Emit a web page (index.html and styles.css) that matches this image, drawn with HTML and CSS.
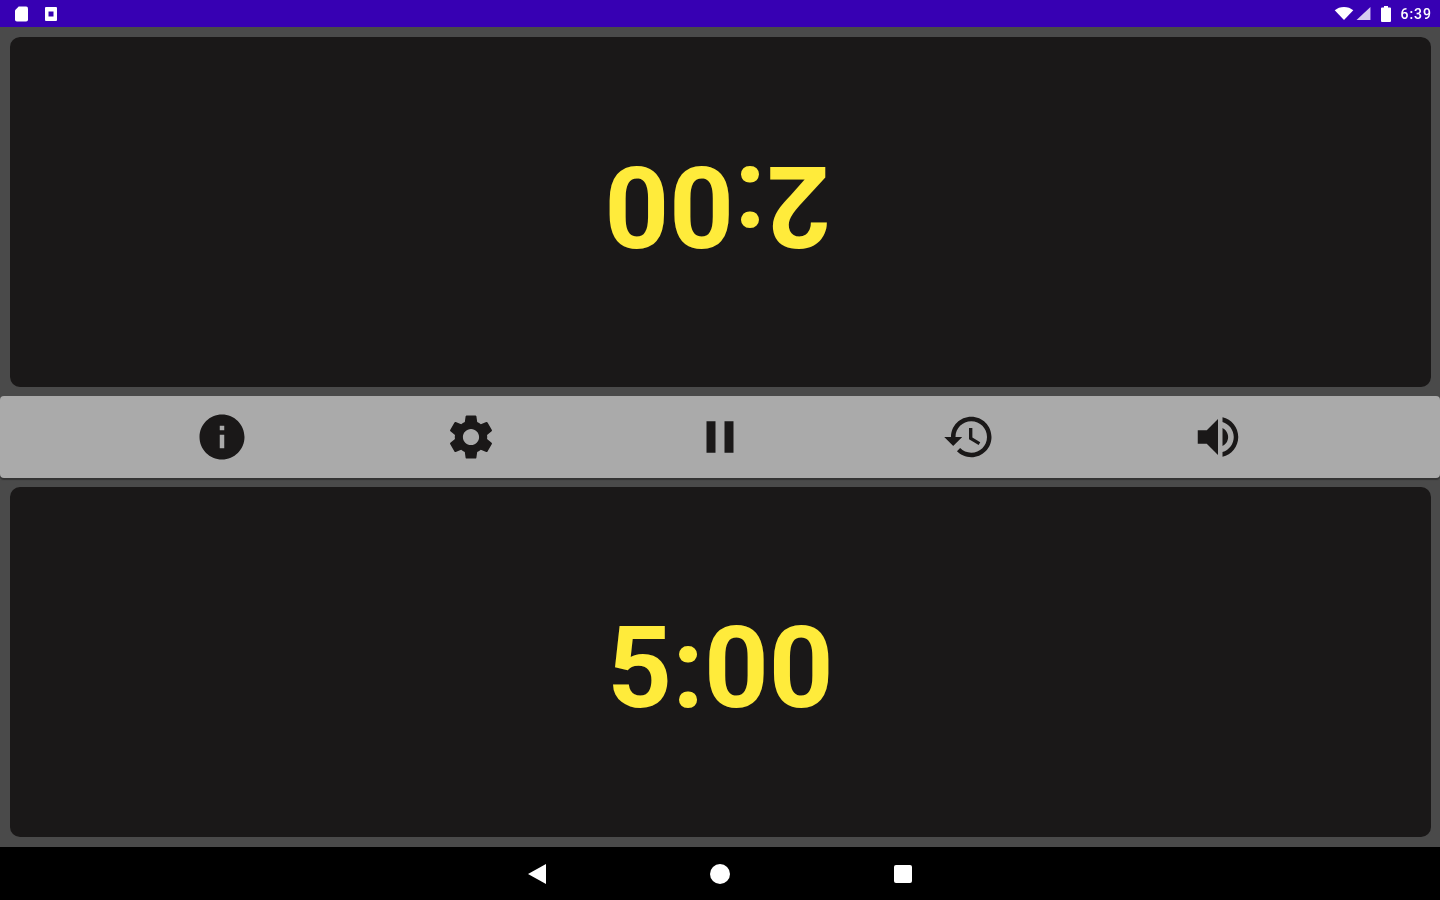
FILE: index.html
```html
<!DOCTYPE html>
<html>
  <head>
    <title>Chess Clock</title>
    <link rel="stylesheet" href="styles.css">
    <meta charset="utf-8">
  </head>
  <body>
    <div class="status-bar">
      <div class="status-left">
        <svg class="sd-icon" viewBox="0 0 14 16"><path d="M4 0h8a2 2 0 0 1 2 2v12a2 2 0 0 1-2 2H2a2 2 0 0 1-2-2V4z"/></svg>
        <svg class="note-icon" viewBox="0 0 12 14"><path fill-rule="evenodd" d="M1 0h10a1 1 0 0 1 1 1v12a1 1 0 0 1-1 1H1a1 1 0 0 1-1-1V1a1 1 0 0 1 1-1zm2.500 4.500v5h5v-5z"/></svg>
      </div>
      <div class="status-right">
        <svg class="wifi-icon" viewBox="0 0 20 14"><path d="M0 3.500C2.700 1.300 6.200 0 10 0s7.300 1.300 10 3.500L10 14z"/></svg>
        <svg class="signal-icon" viewBox="0 0 15 14"><path d="M15 0v14H0z"/></svg>
        <svg class="battery-icon" viewBox="0 0 10 16"><path d="M3 0h4v1.500h2a1 1 0 0 1 1 1V15a1 1 0 0 1-1 1H1a1 1 0 0 1-1-1V2.500a1 1 0 0 1 1-1h2z"/></svg>
        <span class="clock">6:39</span>
      </div>
    </div>

    <div class="board">
      <div class="player flipped"><span class="time">2:00</span></div>

      <div class="toolbar">
        <button class="tool" title="Info">
          <svg viewBox="0 0 24 24"><path d="M12 2C6.480 2 2 6.480 2 12s4.480 10 10 10 10-4.480 10-10S17.520 2 12 2zm1 15h-2v-6h2v6zm0-8h-2V7h2v2z"/></svg>
        </button>
        <button class="tool" title="Settings">
          <svg viewBox="0 0 24 24"><path d="M19.140 12.940c.04-.3.060-.61.060-.94 0-.32-.020-.64-.070-.94l2.030-1.580c.18-.14.230-.41.120-.61l-1.920-3.320c-.12-.22-.37-.29-.59-.22l-2.390.96c-.5-.38-1.030-.7-1.620-.94l-.36-2.540c-.04-.24-.24-.41-.48-.41h-3.840c-.24 0-.43.170-.47.41l-.36 2.540c-.59.24-1.130.57-1.620.94l-2.390-.96c-.22-.080-.47 0-.59.220L2.740 8.870c-.12.210-.080.47.12.610l2.030 1.580c-.050.3-.090.63-.090.94s.020.640.070.94l-2.030 1.580c-.18.14-.23.41-.12.610l1.920 3.320c.12.220.37.290.59.220l2.390-.96c.5.380 1.030.7 1.620.94l.36 2.540c.050.240.240.410.480.410h3.840c.24 0 .44-.17.470-.41l.36-2.540c.59-.24 1.130-.56 1.620-.94l2.390.96c.22.080.47 0 .59-.22l1.920-3.320c.12-.22.070-.47-.12-.61l-2.010-1.580zM12 15.600c-1.980 0-3.600-1.620-3.600-3.600s1.620-3.600 3.600-3.600 3.600 1.620 3.600 3.600-1.620 3.600-3.600 3.600z"/></svg>
        </button>
        <button class="tool" title="Pause">
          <svg viewBox="0 0 24 24"><path d="M6 19h4V5H6v14zm8-14v14h4V5h-4z"/></svg>
        </button>
        <button class="tool" title="Reset">
          <svg viewBox="0 0 24 24"><path d="M13 3c-4.970 0-9 4.030-9 9H1l3.890 3.890.07.14L9 12H6c0-3.870 3.130-7 7-7s7 3.130 7 7-3.130 7-7 7c-1.930 0-3.680-.79-4.940-2.060l-1.420 1.420C8.270 19.990 10.510 21 13 21c4.970 0 9-4.030 9-9s-4.030-9-9-9zm-1 5v5l4.280 2.540.72-1.210-3.500-2.080V8H12z"/></svg>
        </button>
        <button class="tool" title="Sound">
          <svg viewBox="0 0 24 24"><path d="M3 9v6h4l5 5V4L7 9H3zm13.500 3c0-1.770-1.020-3.290-2.500-4.030v8.050c1.480-.73 2.500-2.250 2.500-4.020zM14 3.230v2.060c2.890.86 5 3.540 5 6.710s-2.110 5.850-5 6.710v2.060c4.010-.91 7-4.490 7-8.770s-2.990-7.860-7-8.770z"/></svg>
        </button>
      </div>

      <div class="player"><span class="time">5:00</span></div>
    </div>

    <div class="nav-bar">
      <svg class="nav-back" viewBox="0 0 18 20"><path d="M18 0v20L0 10z"/></svg>
      <div class="nav-home"></div>
      <div class="nav-recent"></div>
    </div>
  </body>
</html>
```

FILE: styles.css
```css
html, body {
  height: 100%;
}
body {
  margin: 0;
  display: flex;
  flex-direction: column;
  background-color: #4a4a4a;
  font-family: "Roboto", "Liberation Sans", sans-serif;
  overflow: hidden;
  filter: blur(0.5px);
}
svg {
  display: block;
  fill: currentColor;
}

/* status bar */
.status-bar {
  height: 27px;
  flex: none;
  display: flex;
  justify-content: space-between;
  align-items: center;
  background-color: #3700b3;
  color: #fff;
}
.status-left {
  display: flex;
  align-items: center;
  gap: 17px;
  padding-left: 15px;
}
.status-right {
  display: flex;
  align-items: center;
  padding-right: 8px;
}
.sd-icon {
  width: 13px;
  height: 16px;
}
.note-icon {
  width: 12px;
  height: 14px;
}
.wifi-icon {
  width: 20px;
  height: 13px;
}
.signal-icon {
  width: 15px;
  height: 13px;
  margin-left: 2px;
  opacity: 0.8;
}
.battery-icon {
  width: 10px;
  height: 16px;
  margin-left: 10px;
}
.clock {
  margin-left: 9px;
  font-size: 14px;
  font-weight: 500;
  letter-spacing: 1px;
}

/* clock faces */
.board {
  flex: 1;
  display: flex;
  flex-direction: column;
  gap: 9px;
  padding: 10px 0;
}
.player {
  flex: 1;
  margin: 0 9px 0 10px;
  display: flex;
  align-items: center;
  justify-content: center;
  background-color: #1a1818;
  border-radius: 10px;
}
.flipped {
  transform: rotate(180deg);
}
.time {
  position: relative;
  top: 6px;
  font-size: 113px;
  font-weight: 700;
  line-height: 1;
  color: #ffeb3b;
}
.flipped .time {
  left: 3px;
}

/* middle buttons */
.toolbar {
  height: 82px;
  flex: none;
  display: flex;
  justify-content: center;
  background-color: #aaaaaa;
  border-radius: 4px;
  box-shadow: 0 2px 1px #333;
}
.tool {
  width: 249px;
  padding: 0;
  border: none;
  background: none;
  display: flex;
  align-items: center;
  justify-content: center;
  color: #1a1818;
}
.tool svg {
  width: 54px;
  height: 54px;
}

/* android nav */
.nav-bar {
  height: 53px;
  flex: none;
  display: flex;
  align-items: center;
  justify-content: center;
  gap: 164px;
  background-color: #000;
  color: #fff;
}
.nav-back {
  width: 18px;
  height: 20px;
}
.nav-home {
  width: 20px;
  height: 20px;
  border-radius: 50%;
  background-color: #fff;
}
.nav-recent {
  width: 18px;
  height: 18px;
  border-radius: 2px;
  background-color: #fff;
}
```
